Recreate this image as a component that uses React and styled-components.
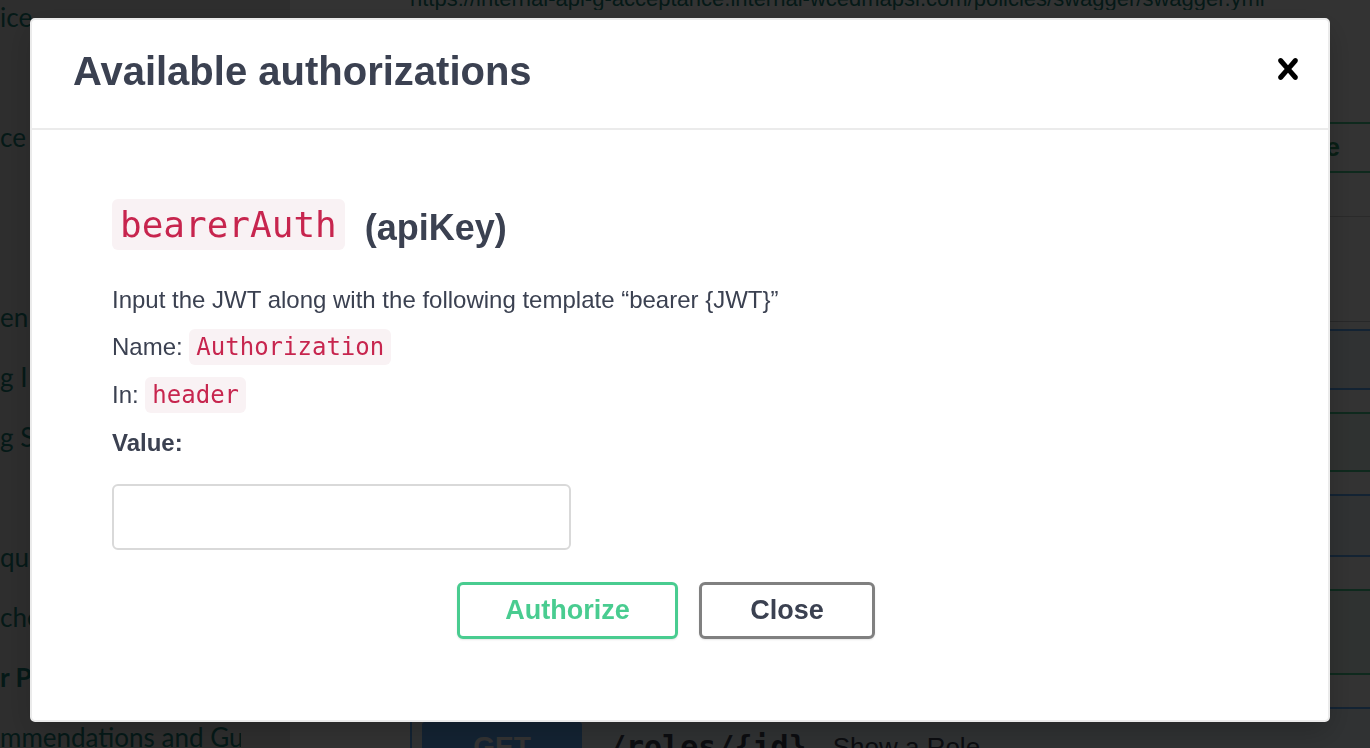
import React from "react";
import styled, { createGlobalStyle } from "styled-components";

const GlobalStyle = createGlobalStyle`
  html, body { margin: 0; padding: 0; }
  body {
    font-family: "Liberation Sans", Arial, Helvetica, sans-serif;
    background: #fff;
    overflow: hidden;
  }
  * { box-sizing: border-box; }
`;

/* ---------- backdrop page ---------- */
const Page = styled.div`
  display: flex;
  width: 100vw;
  height: 100vh;
  overflow: hidden;
  background: #fff;
`;

const Sidebar = styled.nav`
  flex: 0 0 290px;
  background: #e6e6e6;
  overflow: hidden;
`;

const SideList = styled.ul`
  list-style: none;
  margin: -13px 0 0;
  padding: 0;
  width: 241px;
  overflow: hidden;
`;

const SideItem = styled.li`
  height: 60px;
  line-height: 60px;
  font-family: Lato, "Open Sans", sans-serif;
  font-size: 26px;
  font-weight: ${(p) => (p.$bold ? 700 : 400)};
  color: #1a7f76;
  white-space: nowrap;
`;

const Main = styled.main`
  flex: 1;
  min-width: 0;
  padding-left: 120px;
  overflow: hidden;
`;

const UrlBar = styled.div`
  height: 10px;
  display: flex;
  align-items: flex-end;
  overflow: hidden;
  font-size: 22px;
  line-height: 22px;
  color: #1a7f76;
  white-space: nowrap;
`;

const SchemeRow = styled.div`
  margin-top: 112px;
  height: 51px;
  display: flex;
  justify-content: flex-end;
`;

const SchemeAuthButton = styled.div`
  display: flex;
  align-items: center;
  border: 2px solid #49cc90;
  border-radius: 4px;
  color: #2f9a6a;
  font-size: 26px;
  font-weight: 700;
  padding: 0 32px 0 40px;
  margin-right: -4px;
`;

const Divider = styled.div`
  margin-top: 43px;
  height: 1px;
  background: #d0d0d0;
`;

const TagHeader = styled.div`
  margin-top: 104px;
  height: 1px;
  background: rgba(59, 65, 81, 0.3);
`;

const OpList = styled.div`
  margin-top: 7px;
  margin-right: -10px;
  display: flex;
  flex-direction: column;
`;

const COLORS = {
  get: { line: "#61affe", bg: "rgba(97,175,254,.1)" },
  post: { line: "#49cc90", bg: "rgba(73,204,144,.1)" },
};

const Opblock = styled.div`
  flex: none;
  height: ${(p) => p.$h}px;
  margin-bottom: ${(p) => p.$gap}px;
  border: 2px solid ${(p) => COLORS[p.$method].line};
  background: ${(p) => COLORS[p.$method].bg};
  border-radius: 4px;
  padding: 13px 0 0 10px;
  display: flex;
  align-items: flex-start;
  gap: 26px;
  white-space: nowrap;
`;

const MethodBadge = styled.span`
  flex: none;
  width: 160px;
  height: 50px;
  line-height: 50px;
  text-align: center;
  border-radius: 3px;
  background: ${(p) => COLORS[p.$method].line};
  color: #fff;
  font-size: 28px;
  font-weight: 700;
`;

const OpPath = styled.span`
  font-family: "DejaVu Sans Mono", "Liberation Mono", monospace;
  font-size: 30px;
  font-weight: 700;
  line-height: 50px;
  color: #3b4151;
`;

const OpSummary = styled.span`
  font-size: 26px;
  line-height: 50px;
  color: #3b4151;
`;

/* ---------- modal ---------- */
const Overlay = styled.div`
  position: fixed;
  inset: 0;
  background: rgba(0, 0, 0, 0.8);
  display: flex;
  justify-content: center;
  align-items: flex-start;
  padding: 18px 10px 0 0;
`;

const Modal = styled.div`
  width: 1300px;
  background: #fff;
  border: 2px solid #ebebeb;
  border-radius: 5px;
  box-shadow: 0 10px 30px rgba(0, 0, 0, 0.2);
`;

const ModalHeader = styled.header`
  display: flex;
  align-items: center;
  justify-content: space-between;
  padding: 28px 19px 34px 41px;
  border-bottom: 2px solid #ebebeb;
`;

const Title = styled.h3`
  margin: 0;
  font-size: 40px;
  line-height: 46px;
  font-weight: 700;
  color: #3b4151;
`;

const CloseButton = styled.button`
  border: 0;
  background: none;
  padding: 0;
  margin-top: -4px;
  width: 42px;
  height: 42px;
  display: flex;
  cursor: pointer;
  svg { width: 42px; height: 42px; fill: #000; }
`;

const Body = styled.div`
  padding: 69px 80px 81px;
`;

const AuthName = styled.h4`
  margin: 0 0 27px;
  font-size: 36px;
  line-height: 52px;
  font-weight: 700;
  color: #3b4151;
`;

const AuthType = styled.span`
  vertical-align: -3px;
`;

const Code = styled.code`
  font-family: "DejaVu Sans Mono", "Liberation Mono", monospace;
  font-weight: 400;
  color: #c7254e;
  background: #f9f2f4;
  border-radius: 6px;
  padding: ${(p) => (p.$big ? "5px 8px" : "4px 7px")};
  margin-right: ${(p) => (p.$big ? "10px" : "0")};
`;

const Line = styled.p`
  margin: 0 0 10px;
  font-size: 24px;
  line-height: 37px;
  color: #3b4151;
  font-weight: ${(p) => (p.$bold ? 700 : 400)};
`;

const ValueInput = styled.input`
  display: block;
  width: 459px;
  height: 66px;
  margin-top: 23px;
  border: 2px solid #d9d9d9;
  border-radius: 6px;
  padding: 0 16px;
  font-size: 24px;
  outline: none;
  background: #fff;
`;

const ButtonRow = styled.div`
  margin-top: 32px;
  display: flex;
  justify-content: center;
  gap: 21px;
  padding-right: 28px;
`;

const ModalButton = styled.button`
  width: ${(p) => p.$w}px;
  height: 57px;
  border: 3px solid ${(p) => p.$line};
  border-radius: 6px;
  background: #fff;
  color: ${(p) => p.$text};
  font-family: "Liberation Sans", Arial, sans-serif;
  font-size: 27px;
  font-weight: 700;
  box-shadow: 0 1px 2px rgba(0, 0, 0, 0.1);
  cursor: pointer;
`;

const sideItems = [
  { t: "ice" },
  { t: "" },
  { t: "ce" },
  { t: "" },
  { t: "" },
  { t: "en" },
  { t: "g I" },
  { t: "g S" },
  { t: "" },
  { t: "qui" },
  { t: "che" },
  { t: "r P", b: true },
  { t: "mmendations and Guidelines" },
];

const ops = [
  { m: "get", h: 61, gap: 22, path: "/roles", sum: "List Roles" },
  { m: "post", h: 60, gap: 22, path: "/roles", sum: "Create a Role" },
  { m: "get", h: 63, gap: 32, path: "/roles/search", sum: "Search Roles" },
  { m: "post", h: 86, gap: 32, path: "/roles/bulk", sum: "Bulk create" },
  { m: "get", h: 80, gap: 0, path: "/roles/{id}", sum: "Show a Role" },
];

export default function App() {
  return (
    <>
      <GlobalStyle />
      <Page>
        <Sidebar>
          <SideList>
            {sideItems.map((it, i) => (
              <SideItem key={i} $bold={it.b}>
                {it.t || "\u00a0"}
              </SideItem>
            ))}
          </SideList>
        </Sidebar>
        <Main>
          <UrlBar>
            <span>https://internal-api-g-acceptance.internal-wcedmapsi.com/policies/swagger/swagger.yml</span>
          </UrlBar>
          <SchemeRow>
            <SchemeAuthButton>Authorize</SchemeAuthButton>
          </SchemeRow>
          <Divider />
          <TagHeader />
          <OpList>
            {ops.map((o, i) => (
              <Opblock key={i} $method={o.m} $h={o.h} $gap={o.gap}>
                <MethodBadge $method={o.m}>{o.m.toUpperCase()}</MethodBadge>
                <OpPath>{o.path}</OpPath>
                <OpSummary>{o.sum}</OpSummary>
              </Opblock>
            ))}
          </OpList>
        </Main>
      </Page>

      <Overlay>
        <Modal role="dialog" aria-label="Available authorizations">
          <ModalHeader>
            <Title>Available authorizations</Title>
            <CloseButton aria-label="Close">
              <svg viewBox="0 0 20 20" aria-hidden="true">
                <path d="M14.348 14.849c-.469.469-1.229.469-1.697 0L10 11.819l-2.651 3.029c-.469.469-1.229.469-1.697 0-.469-.469-.469-1.229 0-1.697l2.758-3.15-2.759-3.152c-.469-.469-.469-1.228 0-1.697.469-.469 1.228-.469 1.697 0L10 8.183l2.651-3.031c.469-.469 1.228-.469 1.697 0 .469.469.469 1.229 0 1.697l-2.758 3.152 2.758 3.15c.469.469.469 1.229 0 1.698z" />
              </svg>
            </CloseButton>
          </ModalHeader>
          <Body>
            <AuthName>
              <Code $big>bearerAuth</Code> <AuthType>(apiKey)</AuthType>
            </AuthName>
            <Line>Input the JWT along with the following template “bearer {"{JWT}"}”</Line>
            <Line>
              Name: <Code>Authorization</Code>
            </Line>
            <Line>
              In: <Code>header</Code>
            </Line>
            <Line $bold>Value:</Line>
            <ValueInput type="text" />
            <ButtonRow>
              <ModalButton $w={221} $line="#49cc90" $text="#49cc90">
                Authorize
              </ModalButton>
              <ModalButton $w={176} $line="#808080" $text="#3b4151">
                Close
              </ModalButton>
            </ButtonRow>
          </Body>
        </Modal>
      </Overlay>
    </>
  );
}
